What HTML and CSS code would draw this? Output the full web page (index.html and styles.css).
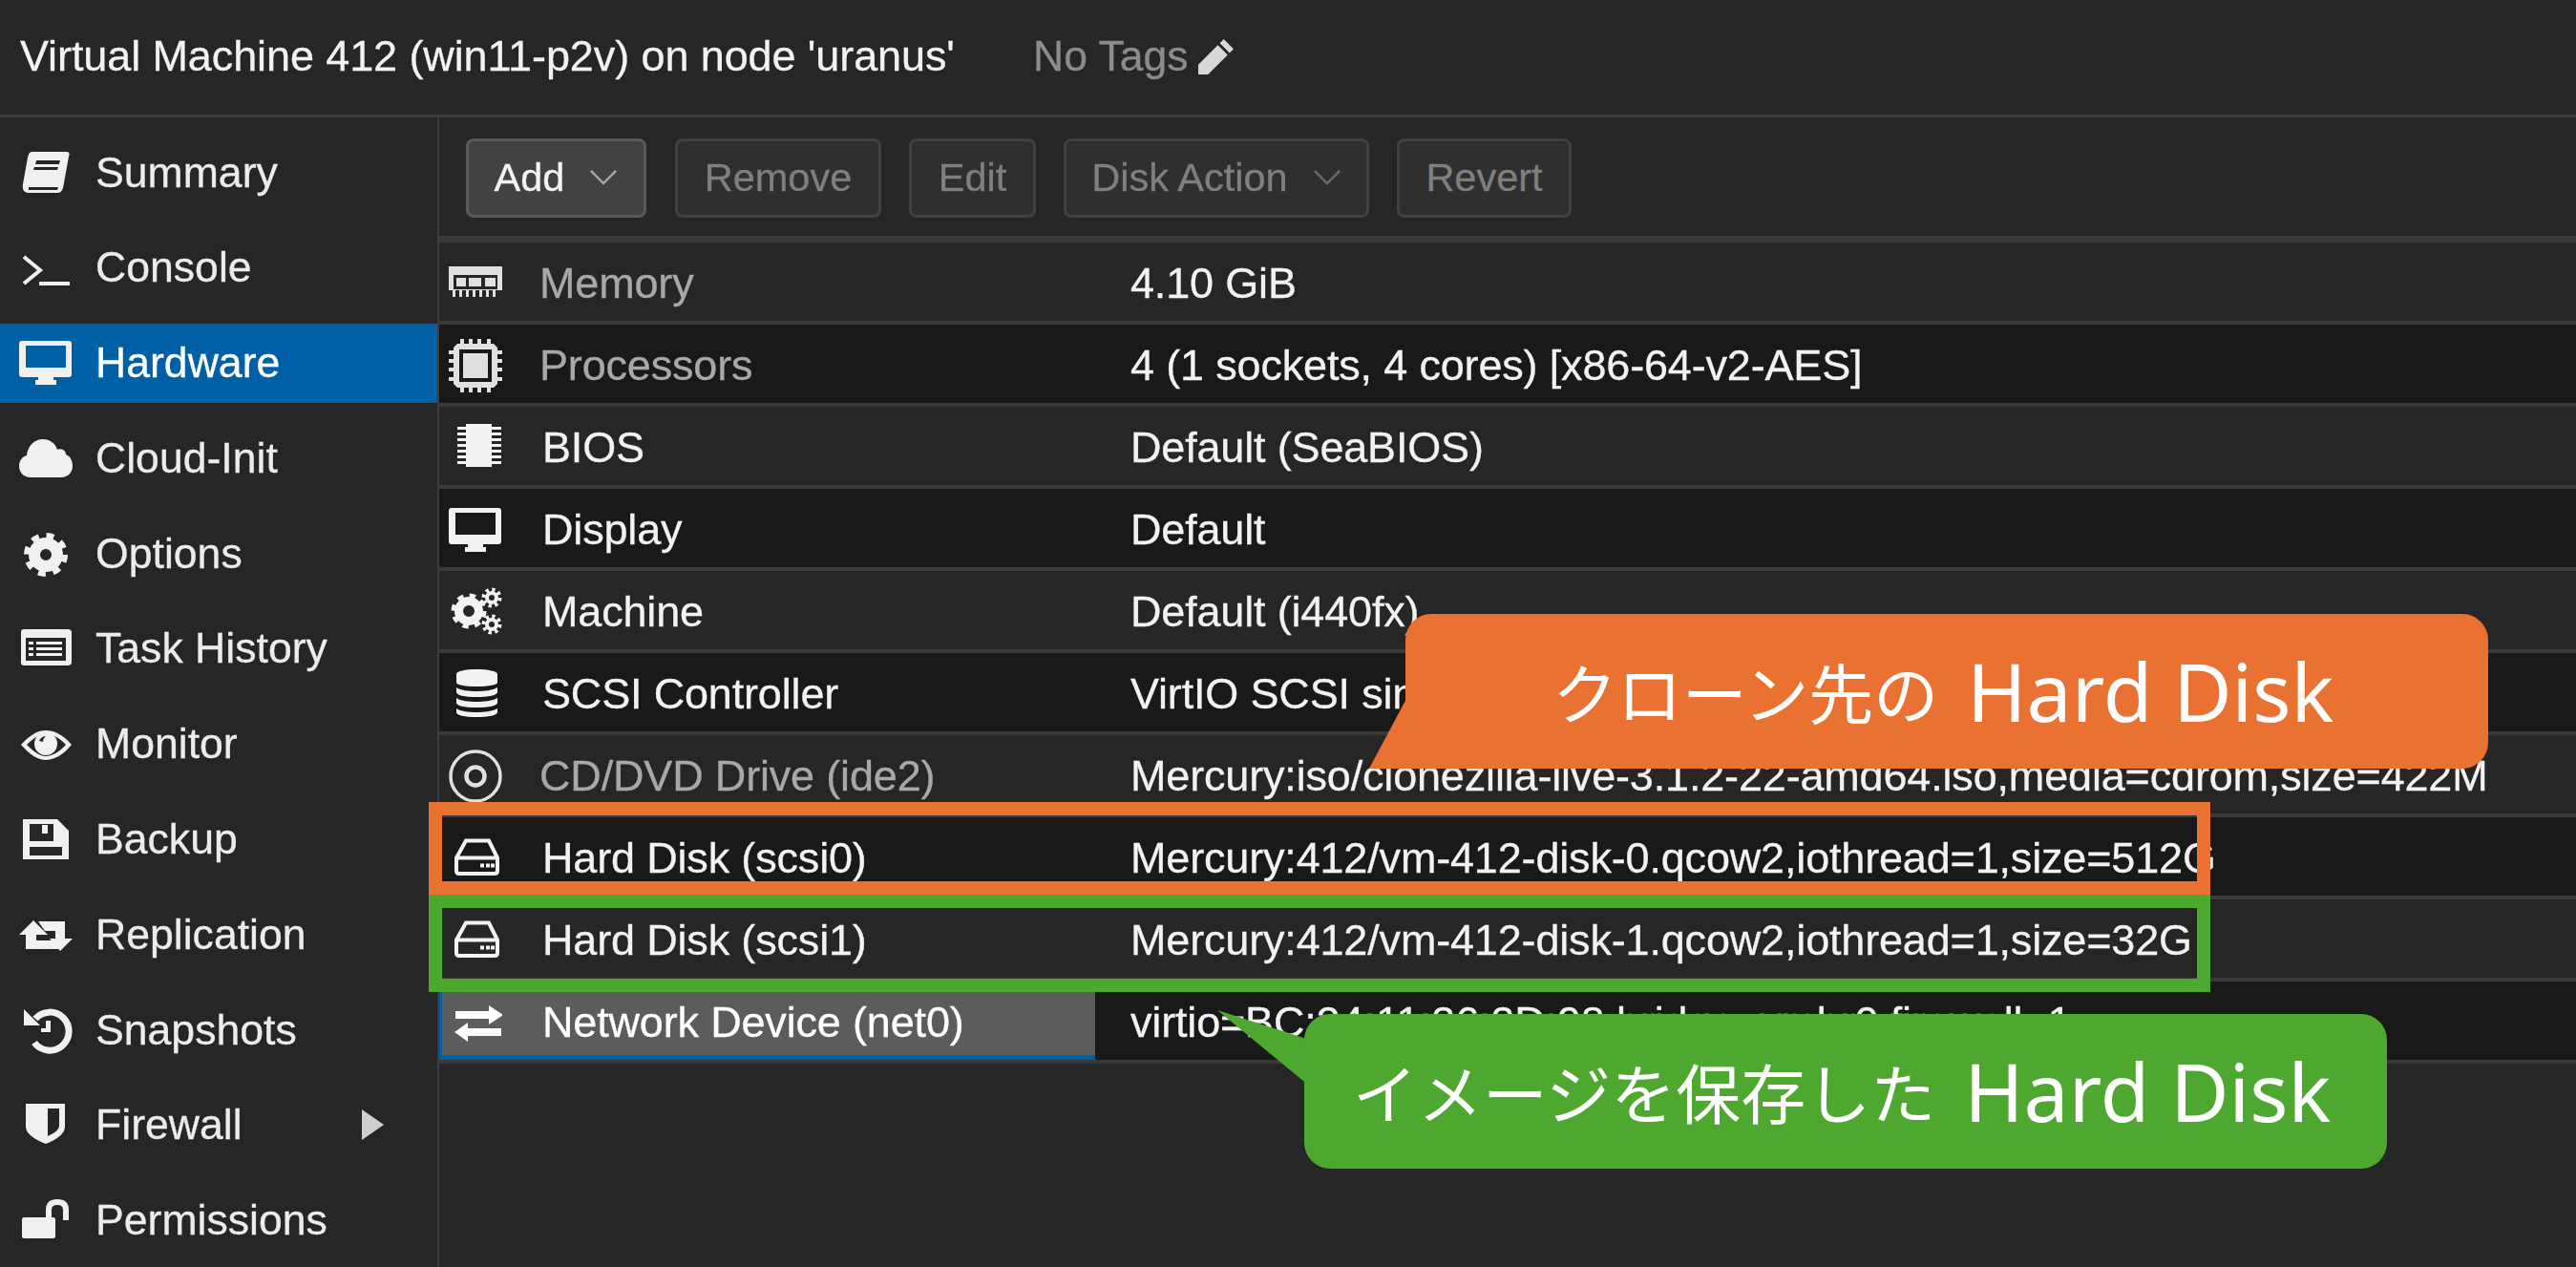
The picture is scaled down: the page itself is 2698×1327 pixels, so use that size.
FILE: index.html
```html
<!DOCTYPE html>
<html lang="ja">
<head>
  <meta charset="UTF-8" />
  <title>Virtual Machine 412 (win11-p2v)</title>
  <link rel="stylesheet" href="styles.css">
</head>
<body>
  <!-- icon set -->
  <svg class="defs" aria-hidden="true">
    <symbol id="i-book" viewBox="0 0 56 56"><path fill-rule="evenodd" d="M14 6h36c3 0 3 3 2 5l-6 33c-1 3-3 5-6 5H10c-5 0-7-4-6-9l5-28c1-4 2-6 5-6zm4 9l-1 4h25l1-4zm-2 7l-1 3h25l1-3zM10 43l0 3h30l1-3z"/></symbol>
    <symbol id="i-term" viewBox="0 0 56 56"><path d="M5 17l17 14L5 45M21 45h32" fill="none" stroke="currentColor" stroke-width="4"/></symbol>
    <symbol id="i-desk" viewBox="0 0 56 56"><path fill-rule="evenodd" d="M3 5h49c2 0 3 1 3 3v32c0 2-1 3-3 3H36v3h3v5H17v-5h3v-3H3c-2 0-3-1-3-3V8c0-2 1-3 3-3zm4 5v23h42V10z"/></symbol>
    <symbol id="i-cloud" viewBox="0 0 56 56"><path d="M12 48C5 48 0 43 0 36c0-6 4-10 8-11C9 15 16 8 25 8c7 0 13 4 15 11 3-2 9 0 9 5 5 2 7 7 7 12 0 7-5 12-12 12z"/></symbol>
    <symbol id="i-cog" viewBox="0 0 56 56"><circle cx="28" cy="29" r="20" fill="none" stroke="currentColor" stroke-width="6" stroke-dasharray="7.85 7.85"/><path fill-rule="evenodd" d="M28 11a18 18 0 1 1 0 36 18 18 0 0 1 0-36zm0 12a6 6 0 1 0 0 12 6 6 0 0 0 0-12z"/></symbol>
    <symbol id="i-list" viewBox="0 0 56 56"><path fill-rule="evenodd" d="M5 8h46c2 0 4 1 4 3v32c0 2-2 3-4 3H5c-2 0-3-1-3-3V11c0-2 1-3 3-3zm2 9v24h42V17z"/><path d="M10 21h5v3h-5zM18 21h27v3H18zM10 27h5v3h-5zM18 27h27v3H18zM10 33h5v3h-5zM18 33h27v3H18z"/></symbol>
    <symbol id="i-eye" viewBox="0 0 56 56"><path fill-rule="evenodd" d="M2 29c10-11 18-15 26-15s18 4 27 15c-9 11-19 16-27 16S12 40 2 29zm6 0c8 8 14 12 20 12s14-4 21-12c-7-8-15-11-21-11S16 21 8 29z"/><circle cx="28" cy="28" r="12"/><path d="M21 25c1-3 4-5 7-5-2 2-3 3-3 6z" fill="#262626"/></symbol>
    <symbol id="i-save" viewBox="0 0 56 56"><path fill-rule="evenodd" d="M4 7h36l12 12v30H4zm7 5v18h25V12zm0 24v9h34v-9z"/><path d="M24 13h6v9h-6z"/></symbol>
    <symbol id="i-retweet" viewBox="0 0 56 56"><path d="M15 13l15 15H18v6h18l8 9H7V28H0zM20 14h28v18h8L43 45 32 32h6v-8H27z"/></symbol>
    <symbol id="i-history" viewBox="0 0 56 56"><path d="M17 16a20 20 0 1 1-1 25" fill="none" stroke="currentColor" stroke-width="7"/><path d="M5 6v17h17zM28 18h5v12h-10v-4h5z"/></symbol>
    <symbol id="i-shield" viewBox="0 0 56 56"><path fill-rule="evenodd" d="M7 6h41v24c0 8-10 14-20 18C18 44 7 38 7 30zm23 5v29c7-3 12-7 12-11V11z"/></symbol>
    <symbol id="i-unlock" viewBox="0 0 56 56"><path d="M5 25h31c1 0 2 1 2 2v18c0 1-1 2-2 2H5c-1 0-2-1-2-2V27c0-1 1-2 2-2z"/><path d="M31 26v-9c0-6 4-8 9-8s9 2 9 8v11" fill="none" stroke="currentColor" stroke-width="6"/></symbol>
    <symbol id="i-ram" viewBox="0 0 56 56"><path fill-rule="evenodd" d="M0 10h56v25H0zm5 9v15h46V19z"/><path d="M8 22h10v9H8zM21 22h13v9H21zM38 22h11v9H38z"/><path d="M4 35h3v7H4zM11 35h3v7h-3zM18 35h3v7h-3zM25 35h3v7h-3zM32 35h3v7h-3zM39 35h3v7h-3zM46 35h3v7h-3z"/></symbol>
    <symbol id="i-cpu" viewBox="0 0 56 56"><path fill-rule="evenodd" d="M9 5h38l4 4v38l-4 4H9l-4-4V9zm2 6v34h34V11z"/><path d="M15 15h26v26H15z"/><path d="M12 0h4v6h-4zM21 0h4v6h-4zM30 0h4v6h-4zM40 0h4v6h-4zM12 50h4v6h-4zM21 50h4v6h-4zM30 50h4v6h-4zM40 50h4v6h-4zM0 12h6v4H0zM0 21h6v4H0zM0 30h6v4H0zM0 40h6v4H0zM50 12h6v4h-6zM50 21h6v4h-6zM50 30h6v4h-6zM50 40h6v4h-6z"/></symbol>
    <symbol id="i-bios" viewBox="0 0 56 56"><path d="M18 3h27v45H18z"/><path d="M9 6h9v3H9zM9 12h9v3H9zM9 18h9v3H9zM9 24h9v3H9zM9 30h9v3H9zM9 36h9v3H9zM9 42h9v3H9zM45 6h10v3H45zM45 12h10v3H45zM45 18h10v3H45zM45 24h10v3H45zM45 30h10v3H45zM45 36h10v3H45zM45 42h10v3H45z"/></symbol>
    <symbol id="i-cogs" viewBox="0 0 56 56"><circle cx="21" cy="27" r="16" fill="none" stroke="currentColor" stroke-width="5" stroke-dasharray="6.3 6.3"/><path fill-rule="evenodd" d="M21 12a15 15 0 1 1 0 30 15 15 0 0 1 0-30zm0 9a6 6 0 1 0 0 12 6 6 0 0 0 0-12z"/><circle cx="45" cy="13" r="8.5" fill="none" stroke="currentColor" stroke-width="4" stroke-dasharray="3.3 3.37"/><path fill-rule="evenodd" d="M45 6a7 7 0 1 1 0 14 7 7 0 0 1 0-14zm0 4a3 3 0 1 0 0 6 3 3 0 0 0 0-6z"/><circle cx="45" cy="41" r="8.5" fill="none" stroke="currentColor" stroke-width="4" stroke-dasharray="3.3 3.37"/><path fill-rule="evenodd" d="M45 34a7 7 0 1 1 0 14 7 7 0 0 1 0-14zm0 4a3 3 0 1 0 0 6 3 3 0 0 0 0-6z"/></symbol>
    <symbol id="i-db" viewBox="0 0 56 56"><path d="M8 7c0-3 9-5 21-5s22 2 22 5v9c0 2-9 4-22 4S8 18 8 16zM8 21c4 3 13 4 21 4s17-1 22-4v5c0 3-9 5-22 5S8 29 8 26zM8 32c4 3 13 4 21 4s17-1 22-4v5c0 3-9 5-22 5S8 40 8 37zM8 43c4 3 13 4 21 4s17-1 22-4v4c0 3-9 5-22 5S8 50 8 47z"/></symbol>
    <symbol id="i-cd" viewBox="0 0 56 56"><circle cx="28" cy="28" r="26" fill="none" stroke="currentColor" stroke-width="3.5"/><circle cx="28" cy="28" r="9.5" fill="none" stroke="currentColor" stroke-width="4.5"/></symbol>
    <symbol id="i-hdd" viewBox="0 0 56 56"><path d="M18 9.500h24l9 18V41c0 2-1 3-3 3H11c-2 0-3-1-3-3V27.500zM8 27.500h43" fill="none" stroke="currentColor" stroke-width="4"/><path d="M33 33.500h4v4h-4zM39 33.500h4v4h-4zM44 33.500h4v4h-4z"/></symbol>
    <symbol id="i-net" viewBox="0 0 56 56"><path d="M7 16h35v-6l15 10-15 10v-6H7zM55 34H20v-6L6 38l14 10v-6h35z"/></symbol>
  </svg>

  <div class="app">
    <header class="topbar">
      <span class="vm-title">Virtual Machine 412 (win11-p2v) on node 'uranus'</span>
      <span class="tags">No Tags</span>
      <svg class="pencil" viewBox="0 0 40 40"><path d="M28 2l10 10-4 4-10-10zM22 8l10 10-20 20H2V28z" fill="#d8d8d8"/></svg>
    </header>

    <div class="main">
      <nav class="sidebar">
        <a class="nav-item"><svg class="nav-ico"><use href="#i-book"/></svg>Summary</a>
        <a class="nav-item"><svg class="nav-ico"><use href="#i-term"/></svg>Console</a>
        <a class="nav-item active"><svg class="nav-ico"><use href="#i-desk"/></svg>Hardware</a>
        <a class="nav-item"><svg class="nav-ico"><use href="#i-cloud"/></svg>Cloud-Init</a>
        <a class="nav-item"><svg class="nav-ico"><use href="#i-cog"/></svg>Options</a>
        <a class="nav-item"><svg class="nav-ico"><use href="#i-list"/></svg>Task History</a>
        <a class="nav-item"><svg class="nav-ico"><use href="#i-eye"/></svg>Monitor</a>
        <a class="nav-item"><svg class="nav-ico"><use href="#i-save"/></svg>Backup</a>
        <a class="nav-item"><svg class="nav-ico"><use href="#i-retweet"/></svg>Replication</a>
        <a class="nav-item"><svg class="nav-ico"><use href="#i-history"/></svg>Snapshots</a>
        <a class="nav-item"><svg class="nav-ico"><use href="#i-shield"/></svg>Firewall<span class="arrow"></span></a>
        <a class="nav-item"><svg class="nav-ico"><use href="#i-unlock"/></svg>Permissions</a>
      </nav>

      <section class="content">
        <div class="toolbar">
          <button class="btn btn-add">Add<svg class="chev" viewBox="0 0 32 20"><path d="M2 3l14 14L30 3"/></svg></button>
          <button class="btn btn-remove">Remove</button>
          <button class="btn btn-edit">Edit</button>
          <button class="btn btn-action">Disk Action<svg class="chev" viewBox="0 0 32 20"><path d="M2 3l14 14L30 3"/></svg></button>
          <button class="btn btn-revert">Revert</button>
        </div>

        <div class="grid">
          <div class="row dim"><div class="name"><svg class="row-ico"><use href="#i-ram"/></svg><span>Memory</span></div><div class="value">4.10 GiB</div></div>
          <div class="row dim alt"><div class="name"><svg class="row-ico"><use href="#i-cpu"/></svg><span>Processors</span></div><div class="value">4 (1 sockets, 4 cores) [x86-64-v2-AES]</div></div>
          <div class="row"><div class="name"><svg class="row-ico"><use href="#i-bios"/></svg><span>BIOS</span></div><div class="value">Default (SeaBIOS)</div></div>
          <div class="row alt"><div class="name"><svg class="row-ico"><use href="#i-desk"/></svg><span>Display</span></div><div class="value">Default</div></div>
          <div class="row"><div class="name"><svg class="row-ico"><use href="#i-cogs"/></svg><span>Machine</span></div><div class="value">Default (i440fx)</div></div>
          <div class="row alt"><div class="name"><svg class="row-ico"><use href="#i-db"/></svg><span>SCSI Controller</span></div><div class="value">VirtIO SCSI single</div></div>
          <div class="row dim"><div class="name"><svg class="row-ico"><use href="#i-cd"/></svg><span>CD/DVD Drive (ide2)</span></div><div class="value">Mercury:iso/clonezilla-live-3.1.2-22-amd64.iso,media=cdrom,size=422M</div></div>
          <div class="row alt"><div class="name"><svg class="row-ico"><use href="#i-hdd"/></svg><span>Hard Disk (scsi0)</span></div><div class="value">Mercury:412/vm-412-disk-0.qcow2,iothread=1,size=512G</div></div>
          <div class="row"><div class="name"><svg class="row-ico"><use href="#i-hdd"/></svg><span>Hard Disk (scsi1)</span></div><div class="value">Mercury:412/vm-412-disk-1.qcow2,iothread=1,size=32G</div></div>
          <div class="row alt selected"><div class="name"><svg class="row-ico"><use href="#i-net"/></svg><span>Network Device (net0)</span></div><div class="value">virtio=BC:24:11:36:3D:98,bridge=vmbr0,firewall=1</div></div>
        </div>
      </section>
    </div>

    <!-- annotations drawn on top of the screenshot -->
    <div class="frame frame-orange"></div>
    <div class="frame frame-green"></div>
    <div class="callout callout-orange"><span class="jp">クローン先の</span><span class="en">Hard Disk</span></div>
    <div class="callout callout-green"><span class="jp">イメージを保存した</span><span class="en">Hard Disk</span></div>
  </div>
</body>
</html>
```

FILE: styles.css
```css
* {
  box-sizing: border-box;
}
body {
  margin: 0;
  background-color: #262626;
  color: #f2f2f2;
  font-family: "Liberation Sans", Arial, sans-serif;
  font-size: 45px;
  overflow: hidden;
}
.defs {
  position: absolute;
  width: 0;
  height: 0;
}
.app {
  position: relative;
  width: 2698px;
  height: 1327px;
}

/* the screenshot was upscaled, so everything under the annotations is a bit soft */
.topbar,
.main {
  filter: blur(0.7px);
  -webkit-text-stroke: 0.3px;
}

/* top bar */
.topbar {
  display: flex;
  align-items: center;
  height: 123px;
  padding: 0 0 2px 21px;
  border-bottom: 3px solid #3d3d3d;
}
.vm-title {
  width: 1061px;
  letter-spacing: -0.1px;
}
.tags {
  font-size: 44.5px;
  color: #8c8c8c;
}
.pencil {
  width: 41px;
  height: 41px;
  margin-left: 9px;
}

.main {
  display: flex;
  height: 1204px;
}

/* left menu */
.sidebar {
  display: flex;
  flex-direction: column;
  gap: 16.8px;
  width: 460px;
  padding-top: 16px;
  border-right: 2px solid #3d3d3d;
}
.nav-item {
  display: flex;
  align-items: center;
  height: 83px;
  flex: none;
  padding-left: 20px;
  font-size: 44.6px;
  color: #ececec;
}
.nav-item.active {
  background-color: #0060a6;
  color: #fff;
}
.nav-ico {
  width: 56px;
  height: 56px;
  margin-right: 24px;
  fill: currentColor;
  color: #f0f0f0;
}
.arrow {
  width: 0;
  height: 0;
  margin-left: auto;
  margin-right: 56px;
  border-left: 23px solid #cfcfcf;
  border-top: 16px solid transparent;
  border-bottom: 16px solid transparent;
}

/* toolbar */
.content {
  flex: 1;
}
.toolbar {
  display: flex;
  align-items: center;
  height: 131px;
  padding: 3px 0 0 28px;
  border-bottom: 7px solid #3a3a3a;
}
.btn {
  display: flex;
  align-items: center;
  justify-content: center;
  height: 83px;
  margin-right: 29px;
  padding: 0 0 2px;
  border: 3px solid #414141;
  border-radius: 8px;
  background-color: #2f2f2f;
  color: #7f7f7f;
  font-family: inherit;
  font-size: 41.5px;
}
.btn-add {
  width: 189px;
  margin-right: 30px;
  background-color: #424242;
  border-color: #5a5a5a;
  color: #f2f2f2;
}
.btn-remove {
  width: 216px;
}
.btn-edit {
  width: 133px;
}
.btn-action {
  width: 320px;
}
.btn-revert {
  width: 183px;
}
.chev {
  width: 30px;
  height: 19px;
  margin-left: 26px;
  fill: none;
  stroke: #a8a8a8;
  stroke-width: 2.5;
}
.btn-action .chev {
  stroke: #6c6c6c;
}

/* hardware table */
.row {
  display: flex;
  height: 86px;
  padding-top: 3px;
  border-bottom: 4px solid #3a3a3a;
  letter-spacing: -0.17px;
}
.row.alt {
  background-color: #191919;
}
.name {
  display: flex;
  align-items: center;
  width: 687px;
  padding-left: 10px;
}
.row-ico {
  flex: none;
  width: 56px;
  height: 56px;
  margin-right: 42px;
  fill: currentColor;
}
.value {
  display: flex;
  align-items: center;
  padding-left: 37px;
  white-space: nowrap;
}
.dim .name {
  color: #a8a8a8;
}
.dim .row-ico {
  color: #e0e0e0;
}
.dim .name span {
  margin-left: -3px;
}
.selected .name {
  background-color: #5c5c5c;
  border-left: 3px solid #0060a6;
  border-bottom: 5px solid #0060a6;
  color: #fff;
  padding-left: 7px;
  padding-top: 5px;
}

/* annotations */
.frame {
  position: absolute;
  left: 449px;
  width: 1866px;
  border-style: solid;
  border-width: 14px;
}
.frame-orange {
  top: 840px;
  height: 97px;
  border-color: #e97132;
}
.frame-green {
  top: 937px;
  height: 102px;
  border-color: #4ea72e;
}
.callout {
  position: absolute;
  display: flex;
  align-items: center;
  justify-content: center;
  gap: 30px;
  width: 1134px;
  height: 162px;
  padding: 0 8px 2px 0;
  border-radius: 27px;
  color: #fff;
  font-family: "Noto Sans CJK JP", "Noto Sans", sans-serif;
  white-space: nowrap;
}
.callout::before {
  content: "";
  position: absolute;
  background-color: inherit;
}
.callout .jp {
  font-size: 68px;
}
.callout .en {
  font-family: "Noto Sans", sans-serif;
  font-size: 84px;
}
.callout-orange {
  left: 1472px;
  top: 643px;
  background-color: #e97132;
}
.callout-orange::before {
  left: -38px;
  top: 91px;
  width: 70px;
  height: 71px;
  clip-path: polygon(0 100%, 54% 0, 100% 100%);
}
.callout-green {
  left: 1366px;
  top: 1062px;
  background-color: #4ea72e;
}
.callout-green::before {
  left: -91px;
  top: -4px;
  width: 93px;
  height: 75px;
  clip-path: polygon(0 0, 98% 39%, 98% 100%);
}
```
